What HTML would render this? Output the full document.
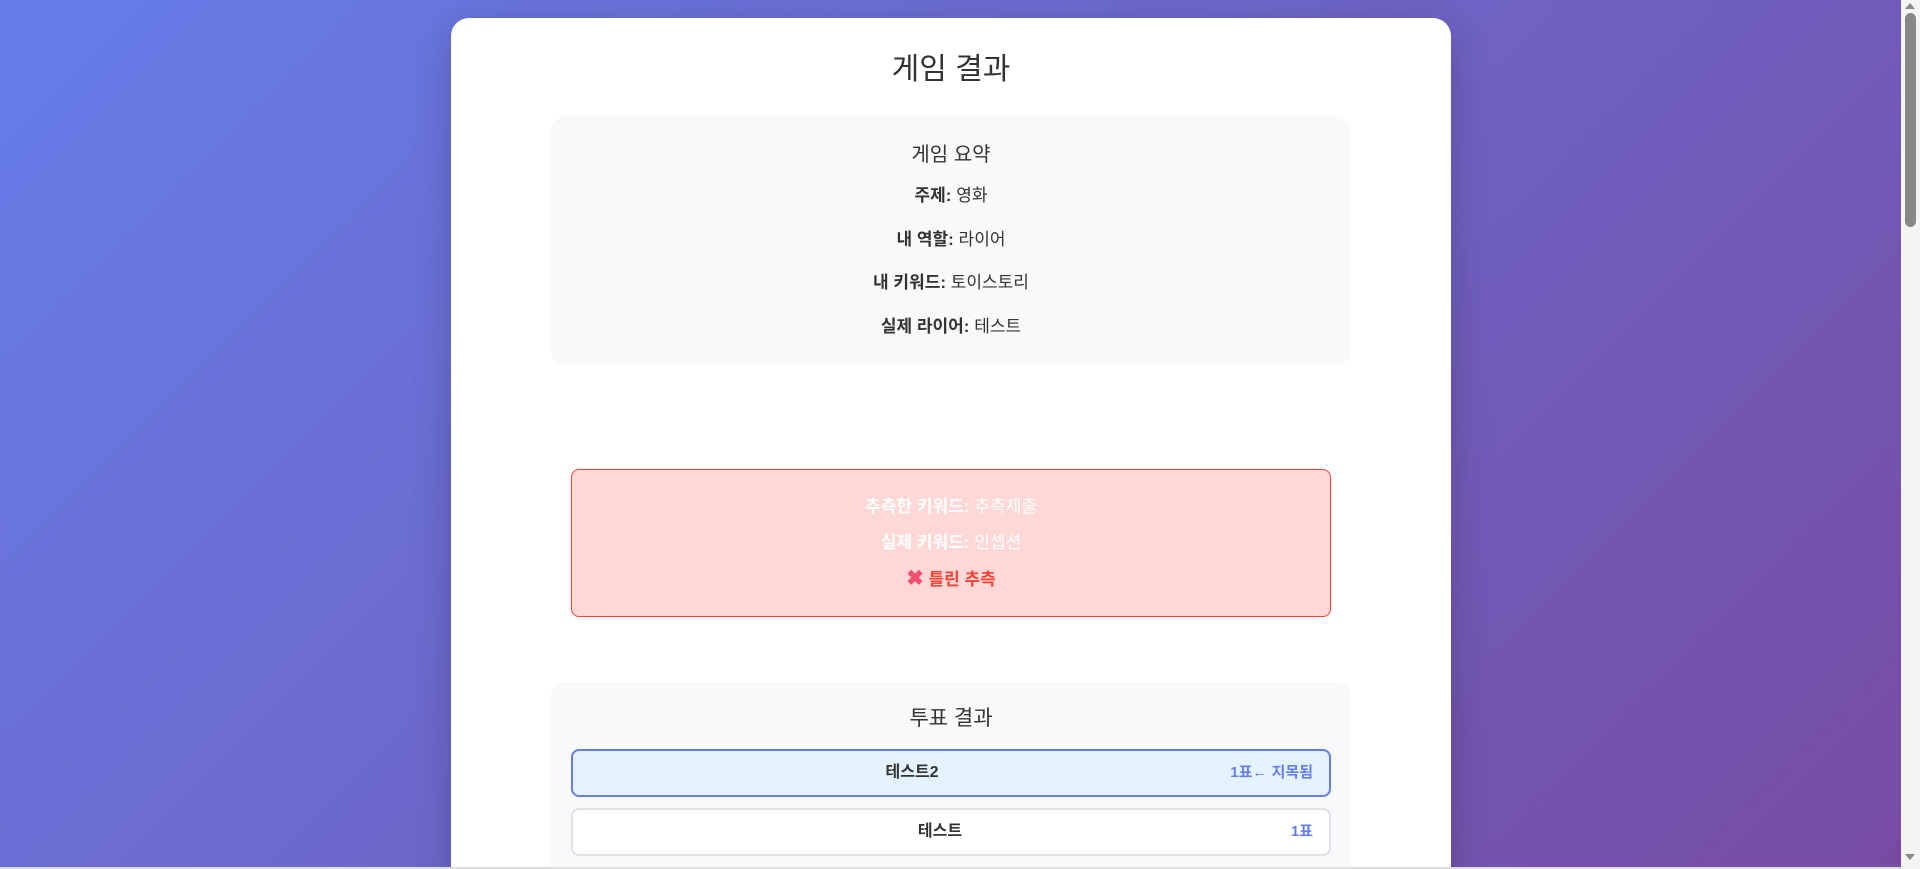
<!DOCTYPE html>
<html><head><meta charset="utf-8"><style>
*{margin:0;padding:0;box-sizing:border-box}
html,body{width:1920px;height:869px;overflow:hidden}
body{background:linear-gradient(135deg,#667eea 0%,#764ba2 100%);font-family:"Liberation Sans","Noto Sans CJK KR",sans-serif;position:relative;color:#333}
.card{position:absolute;left:451px;top:18px;width:1000px;height:900px;background:#fff;border-radius:18px;box-shadow:0 10px 40px rgba(0,0,0,.2)}
h1{position:absolute;left:0;right:0;top:26px;text-align:center;font-size:30px;font-weight:400;color:#333}
.sum{position:absolute;left:100px;top:98px;width:800px;height:249px;background:#f8f9fa;border-radius:15px}
.sum h3{position:absolute;left:0;right:0;top:22px;font-size:20px;font-weight:400;text-align:center}
.sum p{position:absolute;left:0;right:0;text-align:center;font-size:17px;line-height:22px}
.red{position:absolute;left:120px;top:451px;width:760px;height:148px;background:#fdd8d6;border:1px solid #f44336;border-radius:8px}
.red p{position:absolute;left:0;right:0;text-align:center;font-size:17px;line-height:22px;color:#fff}
.vote{position:absolute;left:100px;top:664px;width:800px;height:300px;background:#f8f9fa;border-radius:15px}
.vote h3{position:absolute;left:0;right:0;top:20px;font-size:21px;font-weight:400;text-align:center}
.item{position:absolute;left:20px;width:760px;height:48px;border-radius:8px;border:2px solid #dee2e6;background:#fff;font-weight:700;font-size:16px;line-height:44px}
.item .n{position:absolute;left:0;text-align:center}
.item .c{position:absolute;right:16px;color:#667eea;font-size:15px}
.sb{position:absolute;left:1901px;top:0;width:19px;height:869px;background:#f4f4f4}
.thumb{position:absolute;left:4px;top:13px;width:11px;height:214px;background:#888;border-radius:6px}
</style></head><body>
<div class="card">
<h1>게임 결과</h1>
<div class="sum">
<h3>게임 요약</h3>
<p style="top:69px"><b>주제:</b> 영화</p>
<p style="top:113px"><b>내 역할:</b> 라이어</p>
<p style="top:156px"><b>내 키워드:</b> 토이스토리</p>
<p style="top:200px"><b>실제 라이어:</b> 테스트</p>
</div>
<div class="red">
<p style="top:26px"><b>추측한 키워드:</b> 추측제출</p>
<p style="top:62px"><b>실제 키워드:</b> 인셉션</p>
<p style="top:98px;color:#f44336;font-weight:700"><span style="color:#f0506e;font-size:21px">✖</span> 틀린 추측</p>
</div>
<div class="vote">
<h3>투표 결과</h3>
<div class="item" style="top:67px;border-color:#667eea;background:#e3f2fd"><span class="n" style="width:678px">테스트2</span><span class="c">1표← 지목됨</span></div>
<div class="item" style="top:126px"><span class="n" style="width:734px">테스트</span><span class="c">1표</span></div>
</div>
</div>
<div class="sb"><div class="thumb"></div>
<div style="position:absolute;left:4px;top:3px;width:0;height:0;border-left:5px solid transparent;border-right:5px solid transparent;border-bottom:6px solid #888"></div>
<div style="position:absolute;left:4px;top:854px;width:0;height:0;border-left:5px solid transparent;border-right:5px solid transparent;border-top:6px solid #888"></div>
</div>
<div style="position:absolute;left:0;top:867px;width:1901px;height:2px;background:#ddd"></div>
</body></html>
